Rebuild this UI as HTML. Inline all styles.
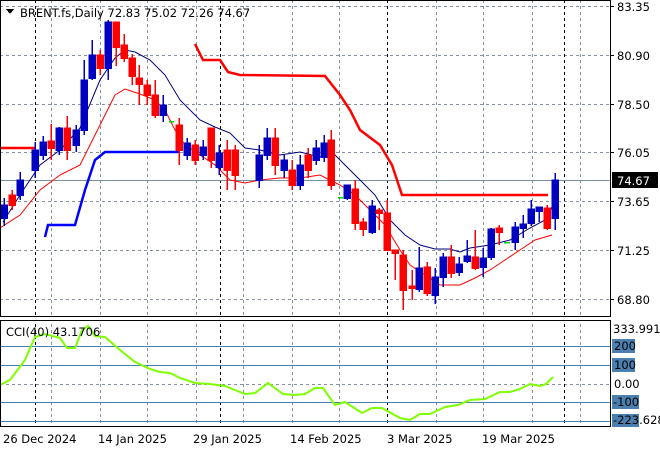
<!DOCTYPE html>
<html><head><style>
body{margin:0;background:#fff;width:660px;height:450px;overflow:hidden;font-family:"DejaVu Sans","Liberation Sans",sans-serif;}
svg text{font-family:"DejaVu Sans","Liberation Sans",sans-serif;font-size:11.5px;fill:#000}
</style></head><body>
<svg width="660" height="450" xmlns="http://www.w3.org/2000/svg" shape-rendering="crispEdges">
<rect width="660" height="450" fill="#fff"/>
<!-- grid -->
<g stroke="#8590a0" stroke-dasharray="3,3" stroke-width="1">
<line x1="0" y1="6.5" x2="610" y2="6.5"/><line x1="0" y1="55.5" x2="610" y2="55.5"/><line x1="0" y1="104.5" x2="610" y2="104.5"/><line x1="0" y1="152.5" x2="610" y2="152.5"/><line x1="0" y1="201.5" x2="610" y2="201.5"/><line x1="0" y1="250.5" x2="610" y2="250.5"/><line x1="0" y1="299.5" x2="610" y2="299.5"/>
<line x1="0" y1="384.5" x2="610" y2="384.5"/>
<g id="vg">
<line x1="51.5" y1="0" x2="51.5" y2="427"/><line x1="100.5" y1="0" x2="100.5" y2="427"/><line x1="147.5" y1="0" x2="147.5" y2="427"/><line x1="196.5" y1="0" x2="196.5" y2="427"/><line x1="243.5" y1="0" x2="243.5" y2="427"/><line x1="292.5" y1="0" x2="292.5" y2="427"/><line x1="339.5" y1="0" x2="339.5" y2="427"/><line x1="436.5" y1="0" x2="436.5" y2="427"/><line x1="483.5" y1="0" x2="483.5" y2="427"/><line x1="532.5" y1="0" x2="532.5" y2="427"/><line x1="580.5" y1="0" x2="580.5" y2="427"/>
</g></g>
<g stroke="#000" stroke-dasharray="3,3"><line x1="35.5" y1="0" x2="35.5" y2="427"/><line x1="220.5" y1="0" x2="220.5" y2="427"/><line x1="387.5" y1="0" x2="387.5" y2="427"/><line x1="564.5" y1="0" x2="564.5" y2="427"/></g>
<rect x="0" y="317" width="610" height="4" fill="#fff"/>
<line x1="0" y1="180.5" x2="610" y2="180.5" stroke="#7890a0"/>
<!-- CCI levels -->
<g stroke="#4a7fb0"><line x1="0" y1="346.5" x2="610" y2="346.5"/><line x1="0" y1="365.5" x2="610" y2="365.5"/><line x1="0" y1="402.5" x2="610" y2="402.5"/><line x1="0" y1="421.5" x2="610" y2="421.5"/></g>
<!-- lines -->
<g fill="none" shape-rendering="auto">
<polyline stroke="#f00" stroke-width="2.5" points="0,148 35,148"/>
<polyline stroke="#f00" stroke-width="2.5" points="195,44 203,60 220,60 228,72 240,75 325,76 340,95 350,110 360,130 380,145 392,165 402,195 548,195"/>
<polyline stroke="#0000ff" stroke-width="2.5" points="45,237 48,225 75,225 85,190 95,160 105,152 180,152"/>
<polyline stroke="#000080" stroke-width="1" points="3,222 20,195 40,165 60,150 80,128 100,80 115,58 125,50 135,52 150,60 165,75 180,100 200,120 215,127 230,133 245,148 260,150 280,155 300,152 320,157 330,150 345,165 360,180 375,195 390,220 405,235 420,245 435,249 450,249 460,252 470,248 490,245 510,240 530,228 545,220 552,207"/>
<polyline stroke="#f00" stroke-width="1" points="0,228 20,215 40,190 60,175 80,165 100,125 115,95 125,89 140,94 155,100 165,110 175,130 185,145 200,155 215,165 230,180 245,183 260,180 280,178 300,178 320,175 340,185 355,195 370,210 385,225 400,250 410,265 425,275 440,285 460,285 475,278 490,270 505,260 520,250 535,240 552,235"/>
<polyline stroke="#7fff00" stroke-width="2" points="0,385 10,380 25,360 35,337 45,334 60,338 67,348 75,348 82,330 88,326 95,336 105,337 120,350 135,362 150,369 160,372 170,373 180,378 195,383 210,384 225,386 245,394 255,393 268,383 283,394 295,395 305,394 315,388 323,388 335,405 345,402 362,413 372,408 382,408 400,418 410,420 420,414 430,414 445,407 458,405 470,400 485,399 500,392 510,392 520,389 530,384 540,386 546,384 553,377"/>
</g>
<!-- candles -->
<g stroke-width="1.5">
<g stroke="#0000c0" fill="#0000c0">
<line x1="4" y1="198" x2="4" y2="226"/><rect x="1" y="205" width="6" height="13"/>
<line x1="20" y1="172" x2="20" y2="200"/><rect x="17" y="180" width="6" height="15"/>
<line x1="35" y1="142" x2="35" y2="178"/><rect x="32" y="150" width="6" height="20"/>
<line x1="43" y1="136" x2="43" y2="160"/><rect x="40" y="142" width="6" height="13"/>
<line x1="59" y1="127" x2="59" y2="155"/><rect x="56" y="128" width="6" height="22"/>
<line x1="76" y1="125" x2="76" y2="152"/><rect x="73" y="130" width="6" height="15"/>
<line x1="84" y1="60" x2="84" y2="135"/><rect x="81" y="80" width="6" height="50"/>
<line x1="92" y1="40" x2="92" y2="80"/><rect x="89" y="55" width="6" height="23"/>
<line x1="108" y1="20" x2="108" y2="80"/><rect x="105" y="22" width="6" height="46"/>
<line x1="163" y1="95" x2="163" y2="122"/><rect x="160" y="105" width="6" height="10"/>
<line x1="187" y1="138" x2="187" y2="160"/><rect x="184" y="143" width="6" height="12"/>
<line x1="203" y1="140" x2="203" y2="160"/><rect x="200" y="147" width="6" height="8"/>
<line x1="219" y1="145" x2="219" y2="175"/><rect x="216" y="153" width="6" height="14"/>
<line x1="259" y1="145" x2="259" y2="188"/><rect x="256" y="155" width="6" height="25"/>
<line x1="267" y1="128" x2="267" y2="160"/><rect x="264" y="138" width="6" height="17"/>
<line x1="284" y1="155" x2="284" y2="178"/><rect x="281" y="160" width="6" height="10"/>
<line x1="300" y1="155" x2="300" y2="190"/><rect x="297" y="165" width="6" height="20"/>
<line x1="316" y1="140" x2="316" y2="165"/><rect x="313" y="148" width="6" height="12"/>
<line x1="324" y1="135" x2="324" y2="162"/><rect x="321" y="143" width="6" height="14"/>
<line x1="347" y1="185" x2="347" y2="200"/><rect x="344" y="185" width="6" height="13"/>
<line x1="372" y1="200" x2="372" y2="234"/><rect x="369" y="206" width="6" height="26"/>
<line x1="419" y1="247" x2="419" y2="292"/><rect x="416" y="268" width="6" height="21"/>
<line x1="435" y1="268" x2="435" y2="304"/><rect x="432" y="277" width="6" height="18"/>
<line x1="443" y1="253" x2="443" y2="287"/><rect x="440" y="257" width="6" height="20"/>
<line x1="459" y1="257" x2="459" y2="276"/><rect x="456" y="264" width="6" height="8"/>
<line x1="467" y1="240" x2="467" y2="263"/><rect x="464" y="256" width="6" height="5"/>
<line x1="483" y1="248" x2="483" y2="277"/><rect x="480" y="258" width="6" height="9"/>
<line x1="491" y1="228" x2="491" y2="260"/><rect x="488" y="229" width="6" height="28"/>
<line x1="515" y1="222" x2="515" y2="250"/><rect x="512" y="227" width="6" height="15"/>
<line x1="523" y1="215" x2="523" y2="238"/><rect x="520" y="224" width="6" height="4"/>
<line x1="531" y1="200" x2="531" y2="226"/><rect x="528" y="209" width="6" height="14"/>
<line x1="539" y1="207" x2="539" y2="222"/><rect x="536" y="207" width="6" height="4"/>
<line x1="555" y1="173" x2="555" y2="230"/><rect x="552" y="180" width="6" height="38"/>
</g>
<g stroke="#f00" fill="#f00">
<line x1="12" y1="190" x2="12" y2="210"/><rect x="9" y="195" width="6" height="10"/>
<line x1="51" y1="124" x2="51" y2="160"/><rect x="48" y="141" width="6" height="7"/>
<line x1="67" y1="116" x2="67" y2="160"/><rect x="64" y="128" width="6" height="22"/>
<line x1="100" y1="50" x2="100" y2="75"/><rect x="97" y="55" width="6" height="13"/>
<line x1="116" y1="22" x2="116" y2="66"/><rect x="113" y="22" width="6" height="25"/>
<line x1="124" y1="34" x2="124" y2="62"/><rect x="121" y="45" width="6" height="13"/>
<line x1="132" y1="54" x2="132" y2="85"/><rect x="129" y="58" width="6" height="18"/>
<line x1="139" y1="65" x2="139" y2="105"/><rect x="136" y="78" width="6" height="6"/>
<line x1="147" y1="80" x2="147" y2="105"/><rect x="144" y="85" width="6" height="10"/>
<line x1="155" y1="80" x2="155" y2="118"/><rect x="152" y="95" width="6" height="20"/>
<line x1="179" y1="118" x2="179" y2="165"/><rect x="176" y="125" width="6" height="25"/>
<line x1="195" y1="140" x2="195" y2="165"/><rect x="192" y="145" width="6" height="15"/>
<line x1="211" y1="128" x2="211" y2="168"/><rect x="208" y="128" width="6" height="32"/>
<line x1="227" y1="140" x2="227" y2="190"/><rect x="224" y="150" width="6" height="20"/>
<line x1="235" y1="145" x2="235" y2="190"/><rect x="232" y="150" width="6" height="25"/>
<line x1="275" y1="128" x2="275" y2="175"/><rect x="272" y="138" width="6" height="27"/>
<line x1="292" y1="160" x2="292" y2="190"/><rect x="289" y="170" width="6" height="15"/>
<line x1="308" y1="148" x2="308" y2="178"/><rect x="305" y="155" width="6" height="15"/>
<line x1="331" y1="130" x2="331" y2="190"/><rect x="328" y="140" width="6" height="45"/>
<line x1="355" y1="180" x2="355" y2="230"/><rect x="352" y="189" width="6" height="34"/>
<line x1="363" y1="218" x2="363" y2="236"/><rect x="360" y="222" width="6" height="7"/>
<line x1="379" y1="208" x2="379" y2="230"/><rect x="376" y="210" width="6" height="3"/>
<line x1="387" y1="200" x2="387" y2="250"/><rect x="384" y="213" width="6" height="37"/>
<line x1="395" y1="250" x2="395" y2="280"/><rect x="392" y="250" width="6" height="3"/>
<line x1="403" y1="250" x2="403" y2="310"/><rect x="400" y="255" width="6" height="35"/>
<line x1="412" y1="270" x2="412" y2="300"/><rect x="409" y="286" width="6" height="2"/>
<line x1="427" y1="262" x2="427" y2="296"/><rect x="424" y="267" width="6" height="26"/>
<line x1="451" y1="245" x2="451" y2="278"/><rect x="448" y="257" width="6" height="16"/>
<line x1="475" y1="230" x2="475" y2="270"/><rect x="472" y="257" width="6" height="11"/>
<line x1="499" y1="225" x2="499" y2="245"/><rect x="496" y="228" width="6" height="4"/>
<line x1="547" y1="205" x2="547" y2="230"/><rect x="544" y="208" width="6" height="20"/>
</g>
<g stroke="#00d000"><line x1="169" y1="121.5" x2="174" y2="121.5"/><line x1="504" y1="242.5" x2="510" y2="242.5"/><line x1="338" y1="197.5" x2="343" y2="197.5"/></g>
</g>
<!-- panel borders -->
<g fill="none" stroke="#000"><rect x="0.5" y="0.5" width="610" height="316"/><rect x="0.5" y="320.5" width="610" height="106"/></g>
<!-- header -->
<polygon points="6,9 14,9 10,14" fill="#000"/>
<text x="20" y="17">BRENT.fs,Daily  72.83 75.02 72.26 74.67</text>
<text x="6" y="336">CCI(40) 43.1706</text>
<!-- right axis -->
<g stroke="#000"><line x1="610" y1="6.5" x2="614" y2="6.5"/><line x1="610" y1="55.5" x2="614" y2="55.5"/><line x1="610" y1="104.5" x2="614" y2="104.5"/><line x1="610" y1="152.5" x2="614" y2="152.5"/><line x1="610" y1="201.5" x2="614" y2="201.5"/><line x1="610" y1="250.5" x2="614" y2="250.5"/><line x1="610" y1="299.5" x2="614" y2="299.5"/></g>
<text x="617" y="11">83.35</text><text x="617" y="60">80.90</text><text x="617" y="109">78.50</text><text x="617" y="157">76.05</text><text x="617" y="206">73.65</text><text x="617" y="255">71.25</text><text x="617" y="304">68.80</text>
<rect x="612" y="172" width="46" height="16" fill="#000"/><text x="617" y="185" style="fill:#fff">74.67</text>
<text x="613" y="333">333.991</text>
<g fill="#4a7fb0"><rect x="612" y="339" width="23" height="14"/><rect x="612" y="358" width="23" height="14"/><rect x="612" y="395" width="27" height="14"/><rect x="612" y="414" width="27" height="13"/></g>
<text x="614" y="350">200</text><text x="614" y="369">100</text><text x="614" y="388">0.00</text><text x="613" y="406">-100</text><text x="613" y="424">-223.628</text>
<!-- dates -->
<text x="3" y="443">26 Dec 2024</text><text x="98" y="443">14 Jan 2025</text><text x="193" y="443">29 Jan 2025</text><text x="290" y="443">14 Feb 2025</text><text x="387" y="443">3 Mar 2025</text><text x="482" y="443">19 Mar 2025</text>
</svg>
</body></html>
